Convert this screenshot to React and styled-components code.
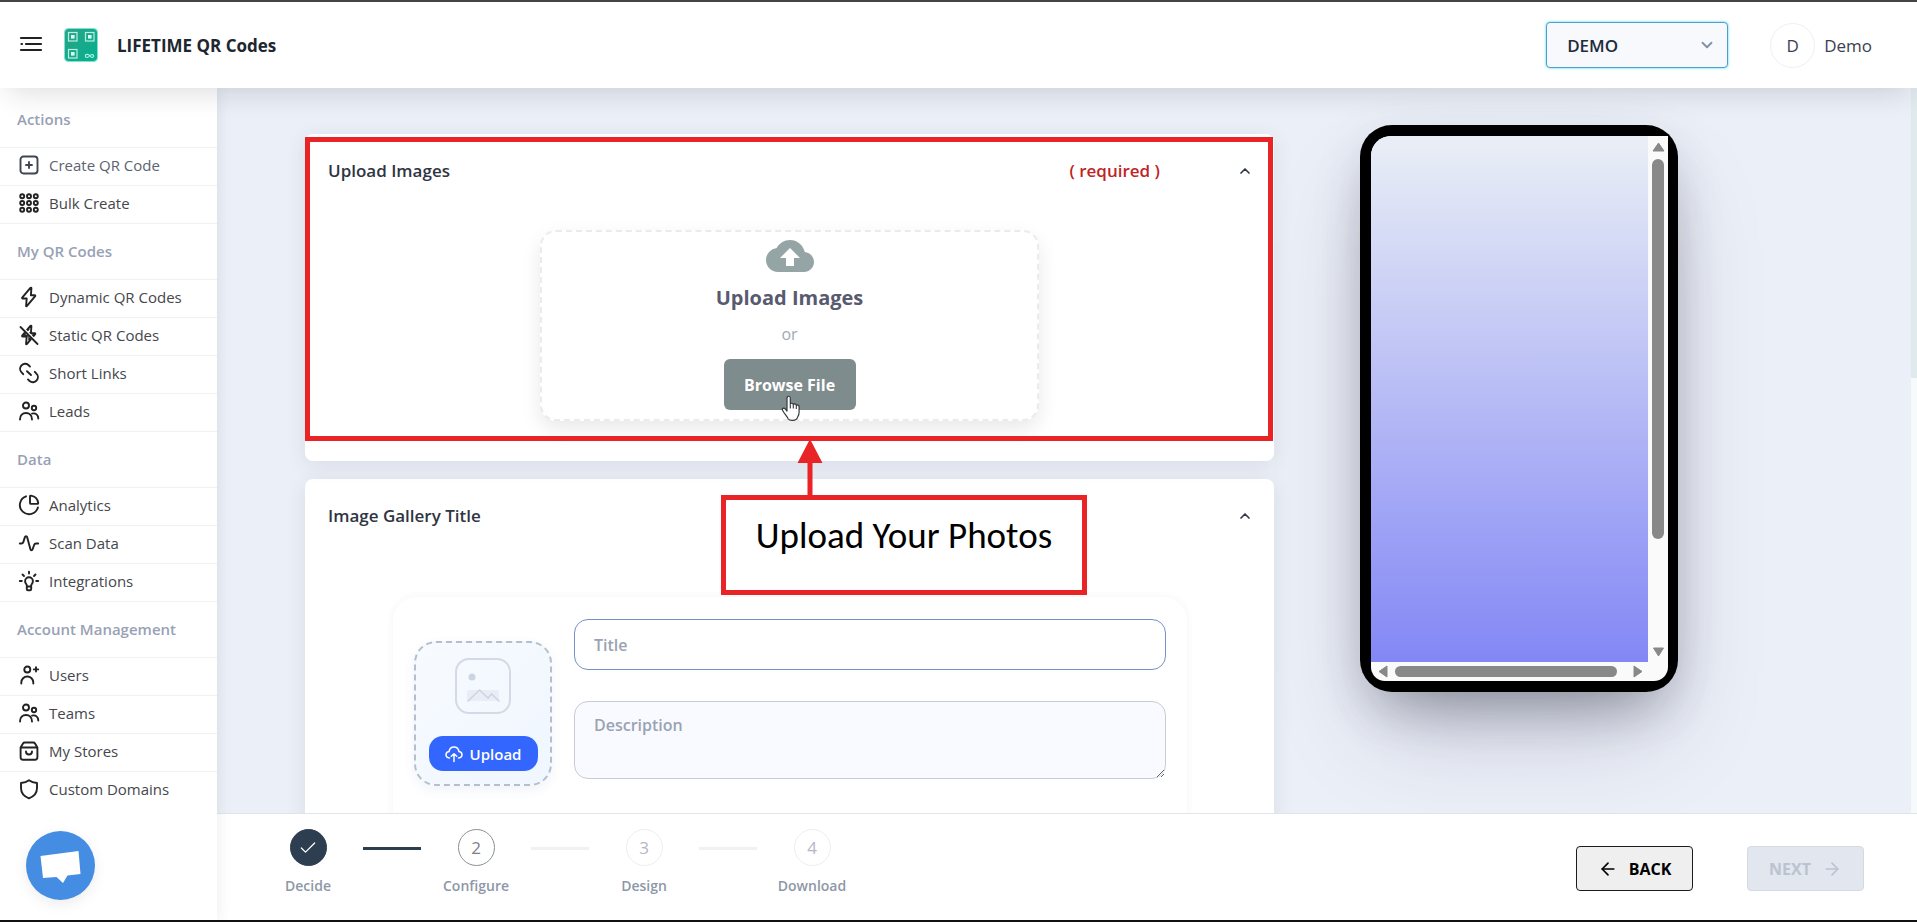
import React from "react";
import styled, { createGlobalStyle } from "styled-components";
import { ArrowLeft, ArrowRight, Check, ChevronDown, ChevronUp } from "lucide-react";
import { MdCloudUpload } from "react-icons/md";

const GlobalStyle = createGlobalStyle`
  * {
    box-sizing: border-box;
  }
  body {
    margin: 0;
    font-family: "Open Sans", "Noto Sans", sans-serif;
    color: #2b3240;
    background: #fff;
  }
  button, input, select, textarea {
    font-family: inherit;
  }
`;

const Page = styled.div`
  display: flex;
  flex-direction: column;
  height: 100vh;
  border-top: 2px solid #444;
  border-bottom: 2px solid #111;
  overflow: hidden;
`;

const Header = styled.header`
  position: relative;
  z-index: 20;
  flex: none;
  display: flex;
  align-items: center;
  height: 86px;
  padding: 0 45px 0 19px;
  background: #fff;
  box-shadow: 0 12px 28px -8px rgba(30, 35, 50, 0.16);
`;

const MenuButton = styled.button`
  display: flex;
  padding: 0;
  margin-right: 21px;
  border: 0;
  background: none;
  color: #222;
`;

const Brand = styled.a`
  display: flex;
  align-items: center;
  gap: 19px;
  margin-right: auto;
  font-size: 17px;
  font-weight: 700;
  color: #20262f;
  text-decoration: none;
`;

const SelectWrapper = styled.label`
  position: relative;
  display: flex;
  margin-right: 42px;
  svg {
    position: absolute;
    top: 14px;
    right: 12px;
    color: #8791a5;
    pointer-events: none;
  }
`;

const Select = styled.select`
  appearance: none;
  width: 182px;
  height: 46px;
  padding: 0 20px;
  border: 1px solid #4f9fcb;
  border-radius: 4px;
  background: #f7f9fd;
  box-shadow: 0 0 2px 1px #a5ecfb;
  color: #222b3a;
  font-size: 17px;
  font-weight: 600;
  outline: 0;
`;

const Account = styled.a`
  display: flex;
  align-items: center;
  gap: 9px;
  color: #3a4150;
  font-size: 17px;
  text-decoration: none;
`;

const Avatar = styled.span`
  display: flex;
  align-items: center;
  justify-content: center;
  width: 45px;
  height: 45px;
  border: 1px solid #eff0f2;
  border-radius: 50%;
`;

const Body = styled.div`
  flex: 1;
  display: flex;
  min-height: 0;
`;

const Sidebar = styled.nav`
  position: relative;
  z-index: 10;
  flex: none;
  width: 217px;
  padding-top: 4px;
  background: #fff;
  box-shadow: 0 0 14px rgba(40, 50, 70, 0.1);
`;

const MenuHeading = styled.h2`
  height: 56px;
  margin: 0;
  padding-left: 17px;
  border-bottom: 1px solid #f0f1f3;
  color: #98a1b5;
  font-size: 15px;
  line-height: 54px;
  font-weight: 600;
`;

const MenuLink = styled.a`
  display: flex;
  align-items: center;
  gap: 8px;
  height: 38px;
  padding: 0 0 4px 17px;
  border-bottom: 1px solid ${props => (props.$last ? "transparent" : "#f0f1f3")};
  color: ${props => (props.$active ? "#5c6370" : "#45474c")};
  font-size: 15px;
  text-decoration: none;
  svg {
    color: ${props => (props.$active ? "#3e4653" : "#222")};
  }
`;

const ChatButton = styled.button`
  position: absolute;
  left: 26px;
  bottom: 20px;
  width: 69px;
  height: 69px;
  padding: 0;
  border: 0;
  border-radius: 50%;
  background: #448de3;
  box-shadow: 0 4px 14px rgba(0, 0, 0, 0.08);
`;

const Main = styled.main`
  flex: 1;
  display: flex;
  flex-direction: column;
  min-width: 0;
`;

const Workspace = styled.div`
  flex: 1;
  display: flex;
  min-height: 0;
  overflow: hidden;
  background: #ebeff7;
`;

const Content = styled.div`
  flex: 1;
  display: grid;
  grid-template-columns: minmax(0, 1fr) 318px;
  gap: 86px;
  align-items: start;
  padding: 37px 233px 0 88px;
`;

const PageTrack = styled.div`
  width: 6px;
  background: #f7fafb;
`;

const PageThumb = styled.div`
  height: 40%;
  background: #e0e9ec;
`;

const Cards = styled.div`
  display: flex;
  flex-direction: column;
  gap: 18px;
  padding-top: 9px;
`;

const Card = styled.section`
  position: relative;
  z-index: ${props => (props.$raised ? 2 : 1)};
  padding-bottom: 40px;
  border-radius: 8px;
  background: #fff;
  box-shadow: 0 4px 20px rgba(60, 70, 90, 0.1);
`;

const CardHeader = styled.div`
  display: flex;
  align-items: center;
  height: 73px;
  padding: 0 21px 0 23px;
`;

const CardTitle = styled.h3`
  flex: 1;
  margin: 0;
  font-size: 17px;
  font-weight: 600;
  color: #2f3542;
`;

const Required = styled.span`
  margin-right: 77px;
  font-size: 17px;
  font-weight: 600;
  color: #bf2326;
`;

const Toggle = styled.button`
  display: flex;
  padding: 0;
  border: 0;
  background: none;
  color: #2f3542;
`;

const DropZone = styled.div`
  display: flex;
  flex-direction: column;
  align-items: center;
  max-width: 499px;
  height: 191px;
  margin: 23px auto 0;
  border: 2px dashed #ebebeb;
  border-radius: 16px;
  background: #fff;
  box-shadow: 0 8px 20px rgba(0, 0, 0, 0.09);
  svg {
    color: #95a5a6;
  }
`;

const DropTitle = styled.div`
  color: #585a70;
  font-size: 20px;
  line-height: 36px;
  font-weight: 700;
`;

const DropText = styled.div`
  color: #a3a8b1;
  font-size: 16px;
  line-height: 36px;
`;

const BrowseButton = styled.button`
  width: 132px;
  height: 51px;
  margin-top: 7px;
  border: 0;
  border-radius: 6px;
  background: #7f8c8d;
  color: #fff;
  font-size: 16px;
  font-weight: 700;
`;

const Outline = styled.div`
  position: absolute;
  top: 3px;
  left: 0;
  right: 1px;
  bottom: 20px;
  border: 5px solid #e82427;
  pointer-events: none;
`;

const Pointer = styled.svg`
  position: absolute;
  top: 261px;
  left: 475px;
`;

const Arrow = styled.svg`
  position: absolute;
  top: 305px;
  left: 492px;
`;

const Callout = styled.div`
  position: absolute;
  top: 361px;
  left: 416px;
  width: 366px;
  height: 100px;
  padding-top: 14px;
  border: 5px solid #e82427;
  background: #fff;
  color: #000;
  font-family: Calibri, Carlito, Lato, sans-serif;
  font-size: 37px;
  line-height: 44px;
  text-align: center;
  white-space: nowrap;
`;

const GalleryForm = styled.form`
  display: flex;
  align-items: flex-start;
  gap: 22px;
  min-height: 240px;
  margin: 45px 87px 0 88px;
  padding: 22px 21px;
  border-radius: 24px;
  background: #fff;
  box-shadow: 0 0 8px rgba(60, 70, 90, 0.06);
`;

const Thumbnail = styled.div`
  flex: none;
  display: flex;
  flex-direction: column;
  align-items: center;
  gap: 22px;
  width: 138px;
  height: 145px;
  margin-top: 22px;
  padding-top: 15px;
  border: 2px dashed #b5becd;
  border-radius: 22px;
  background: linear-gradient(135deg, #f7fbff, #f0f6ff);
  box-shadow: 0 4px 12px rgba(60, 90, 160, 0.07);
`;

const UploadButton = styled.button`
  display: flex;
  align-items: center;
  justify-content: center;
  gap: 7px;
  width: 109px;
  height: 35px;
  padding: 0;
  border: 0;
  border-radius: 14px;
  background: #3366ff;
  color: #fff;
  font-size: 15px;
  font-weight: 600;
`;

const Fields = styled.div`
  flex: 1;
  display: flex;
  flex-direction: column;
  gap: 31px;
`;

const TitleInput = styled.input`
  height: 51px;
  padding: 0 19px;
  border: 1px solid #7590c6;
  border-radius: 14px;
  outline: 0;
  font-size: 16px;
  font-weight: 600;
  &::placeholder {
    color: #9aa3b3;
  }
`;

const DescriptionInput = styled.textarea`
  height: 78px;
  padding: 12px 19px;
  border: 1px solid #c6cbd4;
  border-radius: 14px;
  background: #f8faff;
  font-size: 16px;
  font-weight: 600;
  &::placeholder {
    color: #9aa3b3;
  }
`;

const Phone = styled.div`
  height: 567px;
  padding: 11px 10px 11px 11px;
  border-radius: 32px;
  background: #000;
  box-shadow: 0 50px 100px -20px rgba(50, 50, 93, 0.25),
    0 30px 60px -30px rgba(0, 0, 0, 0.3), 0 20px 50px rgba(50, 60, 80, 0.14);
`;

const PhoneView = styled.div`
  display: grid;
  grid-template-columns: 1fr 20px;
  grid-template-rows: 1fr 19px;
  height: 100%;
  border-radius: 20px 0 14px 14px;
  background: #fafafa;
  overflow: hidden;
`;

const PhoneScreen = styled.div`
  background: linear-gradient(#eaeff6, #8387f5);
`;

const ScrollBar = styled.div`
  display: flex;
  flex-direction: ${props => (props.$horizontal ? "row" : "column")};
  align-items: center;
  gap: 7px;
  padding: ${props => (props.$horizontal ? "0 5px 0 7px" : "6px 0 5px")};
`;

const ScrollTrack = styled.div`
  flex: 1;
`;

const ScrollThumb = styled.div`
  width: ${props => (props.$horizontal ? "96%" : "12px")};
  height: ${props => (props.$horizontal ? "11px" : "79%")};
  border-radius: 6px;
  background: #888;
`;

const Footer = styled.footer`
  flex: none;
  display: flex;
  align-items: flex-start;
  height: 107px;
  padding: 15px 53px 0 36px;
  border-top: 1px solid #dfe5ea;
  background: #fff;
`;

const Steps = styled.ol`
  flex: 1;
  display: flex;
  margin: 0;
  padding: 0;
  list-style: none;
`;

const Step = styled.li`
  display: flex;
  align-items: flex-start;
`;

const StepBody = styled.div`
  display: flex;
  flex-direction: column;
  align-items: center;
  gap: 10px;
  width: 110px;
  color: #8e97a8;
  font-size: 14px;
  line-height: 20px;
  font-weight: 600;
`;

const stepBorders = {
  done: "#2c3e50",
  current: "#8b9192",
  next: "#edeef0"
};

const stepColors = {
  done: "#fff",
  current: "#7d8186",
  next: "#b3b8c3"
};

const StepCircle = styled.span`
  display: flex;
  align-items: center;
  justify-content: center;
  width: 37px;
  height: 37px;
  border: 1px solid ${props => stepBorders[props.$state]};
  border-radius: 50%;
  background: ${props => (props.$state === "done" ? "#2c3e50" : "#fff")};
  color: ${props => stepColors[props.$state]};
  font-size: 17px;
  font-weight: 400;
`;

const StepLine = styled.span`
  width: 58px;
  height: 3px;
  margin-top: 18px;
  background: ${props => (props.$done ? "#2c3e50" : "#eff2f4")};
`;

const FooterButtons = styled.div`
  display: flex;
  gap: 54px;
  padding-top: 17px;
`;

const NavButton = styled.button`
  display: flex;
  align-items: center;
  justify-content: center;
  gap: 11px;
  width: 117px;
  height: 45px;
  padding: 0;
  border: 1px solid #1c1c1c;
  border-radius: 4px;
  background: #efefef;
  color: #000;
  font-size: 16px;
  font-weight: 700;
  &:disabled {
    border-color: #d5dae2;
    background: #e2e6ee;
    color: #bcc3d0;
  }
`;

const Icon = ({ children }) => (
  <svg
    width="24"
    height="24"
    viewBox="0 0 24 24"
    fill="none"
    stroke="currentColor"
    strokeWidth="1.9"
    strokeLinecap="round"
    strokeLinejoin="round"
  >
    {children}
  </svg>
);

const bolt = "M13.4 2.8 5.2 12.6c-.3.4-.1.9.4.9h4.1l-.6 7.4c0 .5.4.6.7.3l8.4-10.1c.3-.4.1-.9-.4-.9h-3.9l.5-7.1c0-.5-.6-.7-1-.3z";

const icons = {
  create: (
    <Icon>
      <rect x="3.5" y="3.5" width="17" height="17" rx="3" />
      <path d="M12 9v6M9 12h6" />
    </Icon>
  ),
  bulk: (
    <Icon>
      {[5.2, 12, 18.8].map(y => [5.2, 12, 18.8].map(x => <circle key={`${x}-${y}`} cx={x} cy={y} r="2" />))}
    </Icon>
  ),
  bolt: (
    <Icon>
      <path d={bolt} />
    </Icon>
  ),
  boltOff: (
    <Icon>
      <path d={bolt} />
      <path d="m12 6-5 6 5 1M12 10l5 1-5 6z" strokeWidth="1.4" />
      <path d="M4 3.500 21 20.500" stroke="#fff" strokeWidth="3" />
      <path d="M3.500 4 20.500 21" strokeWidth="1.8" />
    </Icon>
  ),
  link: (
    <Icon>
      <path d="M6.2 13.2 4.6 11.4A5 5 0 0 1 4.300 4.600 5 5 0 0 1 11.400 4l1.600 1.600" />
      <path d="M17.800 10.800l1.600 1.800a5 5 0 0 1 .3 6.800 5 5 0 0 1-7.100.6L11 18.400" />
      <path d="M10 10.200l4 3.800" />
    </Icon>
  ),
  people: (
    <Icon>
      <circle cx="9" cy="6.500" r="3" />
      <circle cx="17" cy="9" r="2.200" />
      <path d="M3 20.500c0-4 2.500-6.500 6-6.500s6 2.500 6 6.500" />
      <path d="M15 14.600c3.800-1 6.300 1.400 6.300 4.900" />
    </Icon>
  ),
  pie: (
    <Icon>
      <path d="M9 3.300A9.200 9.200 0 1 0 20.900 14.500" />
      <path d="M13 3.500c0-.6.4-1 1-.9a8.700 8.700 0 0 1 7.200 7.200c.1.600-.3 1.100-.9 1.100H14c-.6 0-1-.4-1-1z" />
    </Icon>
  ),
  wave: (
    <Icon>
      <path d="M2.800 12.500h1.700c1 0 1.500-.5 1.800-1.400l1.600-5c.4-1.200 1.900-1.200 2.200 0l3.300 12.200c.3 1.200 1.800 1.200 2.200 0l1.600-4.500c.3-.9.900-1.300 1.800-1.300h2.200" />
    </Icon>
  ),
  bulb: (
    <Icon>
      <path d="M9.800 16.500c0-1.200-1.700-2-1.700-4.300a3.900 3.900 0 0 1 7.800 0c0 2.300-1.700 3.100-1.700 4.300V20c0 .8-.5 1.300-1.200 1.300h-2c-.7 0-1.200-.5-1.200-1.300zM10 17.500h4" />
      <path d="M12 2.600v2M2.800 12h2M19.200 12h2M5.500 5.500 7 7M18.500 5.500 17 7" />
    </Icon>
  ),
  userPlus: (
    <Icon>
      <circle cx="10.300" cy="6.500" r="3" />
      <path d="M4.300 20.500v-1a6 6 0 0 1 12 0v1M19 4.200v4.400M16.800 6.400h4.400" />
    </Icon>
  ),
  store: (
    <Icon>
      <path d="M3.600 8.500 6 4.500c.4-.7 1-1 1.800-1h8.400c.8 0 1.400.3 1.800 1l2.400 4v9.700c0 1.500-1 2.500-2.500 2.500H6.100c-1.500 0-2.500-1-2.500-2.500zM3.600 8.500h16.800" />
      <path d="M9 12.500c0 4 6 4 6 0" />
    </Icon>
  ),
  shield: (
    <Icon>
      <path d="M12 3.200c-2 1.500-4.500 2.400-8 2.800v5c0 5.300 3.200 8.500 8 10.300 4.800-1.800 8-5 8-10.300V6c-3.500-.4-6-1.300-8-2.800z" />
    </Icon>
  )
};

const menu = [
  {
    title: "Actions",
    items: [
      ["Create QR Code", "create"],
      ["Bulk Create", "bulk"]
    ]
  },
  {
    title: "My QR Codes",
    items: [
      ["Dynamic QR Codes", "bolt"],
      ["Static QR Codes", "boltOff"],
      ["Short Links", "link"],
      ["Leads", "people"]
    ]
  },
  {
    title: "Data",
    items: [
      ["Analytics", "pie"],
      ["Scan Data", "wave"],
      ["Integrations", "bulb"]
    ]
  },
  {
    title: "Account Management",
    items: [
      ["Users", "userPlus"],
      ["Teams", "people"],
      ["My Stores", "store"],
      ["Custom Domains", "shield"]
    ]
  }
];

const steps = [
  ["Decide", "done"],
  ["Configure", "current"],
  ["Design", "next"],
  ["Download", "next"]
];

const Logo = () => (
  <svg width="34" height="34" viewBox="0 0 34 34" fill="none">
    <defs>
      <linearGradient id="logo" x1="0" y1="0" x2="1" y2="1">
        <stop offset="0" stopColor="#2aa388" />
        <stop offset="1" stopColor="#04b08e" />
      </linearGradient>
    </defs>
    <rect x=".5" y=".5" width="33" height="33" rx="4" fill="url(#logo)" stroke="#7fe3d0" />
    {[[4, 4], [21, 4], [4, 21]].map(([x, y]) => (
      <g key={`${x}-${y}`}>
        <rect x={x + 0.5} y={y + 0.5} width="8.5" height="8.5" stroke="#b9efe2" strokeWidth="1.2" />
        <rect x={x + 3} y={y + 3} width="3.6" height="3.6" fill="#d9fff6" />
      </g>
    ))}
    <path
      d="M25.500 27.500c-1.400-1.700-4.200-1.500-4.200.4s2.800 2.100 4.200.1c1.400-1.900 4.200-1.900 4.200 0s-2.800 2-4.200-.5z"
      stroke="#a9f3e2"
      strokeWidth="1.1"
    />
  </svg>
);

const Triangle = ({ d, width = 13, height = 10 }) => (
  <svg width={width} height={height} viewBox={`0 0 ${width} ${height}`}>
    <path d={d} fill="#888" stroke="#888" strokeWidth="1" strokeLinejoin="round" />
  </svg>
);

const Menu = () => (
  <Sidebar>
    {menu.map(group => (
      <div key={group.title}>
        <MenuHeading>{group.title}</MenuHeading>
        {group.items.map(([label, icon]) => (
          <MenuLink
            key={label}
            href="#"
            $active={icon === "create"}
            $last={icon === "shield"}
          >
            {icons[icon]}
            {label}
          </MenuLink>
        ))}
      </div>
    ))}
    <ChatButton aria-label="Open chat">
      <svg width="69" height="69" viewBox="0 0 69 69">
        <path d="M14.500 25 52.500 20 54.500 43 41.500 44.500 37 52 30.500 46 17 47z" fill="#fff" />
      </svg>
    </ChatButton>
  </Sidebar>
);

const UploadCard = () => (
  <Card $raised>
    <CardHeader>
      <CardTitle>Upload Images</CardTitle>
      <Required>( required )</Required>
      <Toggle aria-label="Collapse Upload Images">
        <ChevronUp size={16} strokeWidth={2.5} />
      </Toggle>
    </CardHeader>
    <DropZone>
      <MdCloudUpload size={48} />
      <DropTitle>Upload Images</DropTitle>
      <DropText>or</DropText>
      <BrowseButton>Browse File</BrowseButton>
    </DropZone>
    <Outline />
    <Pointer width="22" height="27" viewBox="0 0 22 27">
      <path
        d="M7 3.200C7 .6 10.300.6 10.300 3.200v6c.4-1.400 2.800-1.300 3 .5.700-1.300 2.800-1 3 .8.900-1 2.800-.6 2.800 1.300v5.400c0 3-1.600 4.600-1.900 5.900-.9 2.600-7.500 3.300-9.100.6-.9-2-3.300-4.500-5.300-7.900-1.500-2.400.9-3.400 2.400-1.900L7 16z"
        fill="#fff"
        stroke="#333a3c"
        strokeWidth="1.2"
        strokeLinejoin="round"
      />
      <path d="M10.300 9.500v4M13.300 10v3.500M16.300 11v3" stroke="#333a3c" strokeWidth="1.1" />
    </Pointer>
    <Arrow width="26" height="56" viewBox="0 0 26 56">
      <path d="M13 0 25.500 24H15.500V56H10.500V24H.5z" fill="#e82427" />
    </Arrow>
    <Callout>Upload Your Photos</Callout>
  </Card>
);

const GalleryCard = () => (
  <Card>
    <CardHeader>
      <CardTitle>Image Gallery Title</CardTitle>
      <Toggle aria-label="Collapse Image Gallery Title">
        <ChevronUp size={16} strokeWidth={2.5} />
      </Toggle>
    </CardHeader>
    <GalleryForm>
      <Thumbnail>
        <svg width="56" height="56" viewBox="0 0 56 56" fill="none">
          <rect x="1" y="1" width="54" height="54" rx="13" stroke="#d3dae6" strokeWidth="2" />
          <circle cx="17" cy="19" r="3.5" fill="#cbd4e1" />
          <rect x="12" y="32" width="32" height="11" rx="2" fill="#e9eef6" />
          <path d="M12.500 43.500 24.500 32l8.500 8 3.500-4 8 7.500" stroke="#cdd5e2" strokeWidth="1.6" />
        </svg>
        <UploadButton type="button">
          <svg
            width="18"
            height="18"
            viewBox="0 0 18 18"
            fill="none"
            stroke="currentColor"
            strokeWidth="1.5"
            strokeLinecap="round"
            strokeLinejoin="round"
          >
            <path d="M4.500 13C2.500 12.800 1 11.600 1 9.800c0-1.700 1.300-3 3-3.200C4.500 3.800 6.500 2 9 2s4.500 1.800 5 4.600c1.700.2 3 1.500 3 3.200 0 1.800-1.500 3-3.500 3.200" />
            <path d="M9 16.500V9M6.300 11.300 9 8.700l2.700 2.600" />
          </svg>
          Upload
        </UploadButton>
      </Thumbnail>
      <Fields>
        <TitleInput aria-label="Title" placeholder="Title" />
        <DescriptionInput aria-label="Description" placeholder="Description" />
      </Fields>
    </GalleryForm>
  </Card>
);

const PhonePreview = () => (
  <Phone>
    <PhoneView>
      <PhoneScreen />
      <ScrollBar>
        <Triangle d="M6.500 1 12 9H1z" />
        <ScrollTrack>
          <ScrollThumb />
        </ScrollTrack>
        <Triangle d="M1.500 1h10l-5 8z" />
      </ScrollBar>
      <ScrollBar $horizontal>
        <Triangle width={10} height={13} d="M9 1v11L1 6.500z" />
        <ScrollTrack>
          <ScrollThumb $horizontal />
        </ScrollTrack>
        <Triangle width={10} height={13} d="M1 1v11l8-5.500z" />
      </ScrollBar>
    </PhoneView>
  </Phone>
);

const App = () => (
  <React.Fragment>
    <GlobalStyle />
    <Page>
      <Header>
        <MenuButton aria-label="Toggle menu">
          <svg width="24" height="18" viewBox="0 0 24 18" stroke="currentColor" strokeWidth="2.2">
            <path d="M2 2h20M7 8h15M2.500 8h.5M2 14h20" strokeLinecap="round" />
          </svg>
        </MenuButton>
        <Brand href="#">
          <Logo />
          LIFETIME QR Codes
        </Brand>
        <SelectWrapper>
          <Select aria-label="Workspace" defaultValue="DEMO">
            <option>DEMO</option>
          </Select>
          <ChevronDown size={18} strokeWidth={2.5} />
        </SelectWrapper>
        <Account href="#">
          <Avatar>D</Avatar>
          Demo
        </Account>
      </Header>
      <Body>
        <Menu />
        <Main>
          <Workspace>
            <Content>
              <Cards>
                <UploadCard />
                <GalleryCard />
              </Cards>
              <PhonePreview />
            </Content>
            <PageTrack>
              <PageThumb />
            </PageTrack>
          </Workspace>
          <Footer>
            <Steps>
              {steps.map(([label, state], index) => (
                <Step key={label}>
                  <StepBody>
                    <StepCircle $state={state}>
                      {state === "done" ? <Check size={20} strokeWidth={1.5} /> : index + 1}
                    </StepCircle>
                    {label}
                  </StepBody>
                  {index < steps.length - 1 && <StepLine $done={state === "done"} />}
                </Step>
              ))}
            </Steps>
            <FooterButtons>
              <NavButton>
                <ArrowLeft size={20} />
                BACK
              </NavButton>
              <NavButton disabled>
                NEXT
                <ArrowRight size={20} />
              </NavButton>
            </FooterButtons>
          </Footer>
        </Main>
      </Body>
    </Page>
  </React.Fragment>
);

export default App;
